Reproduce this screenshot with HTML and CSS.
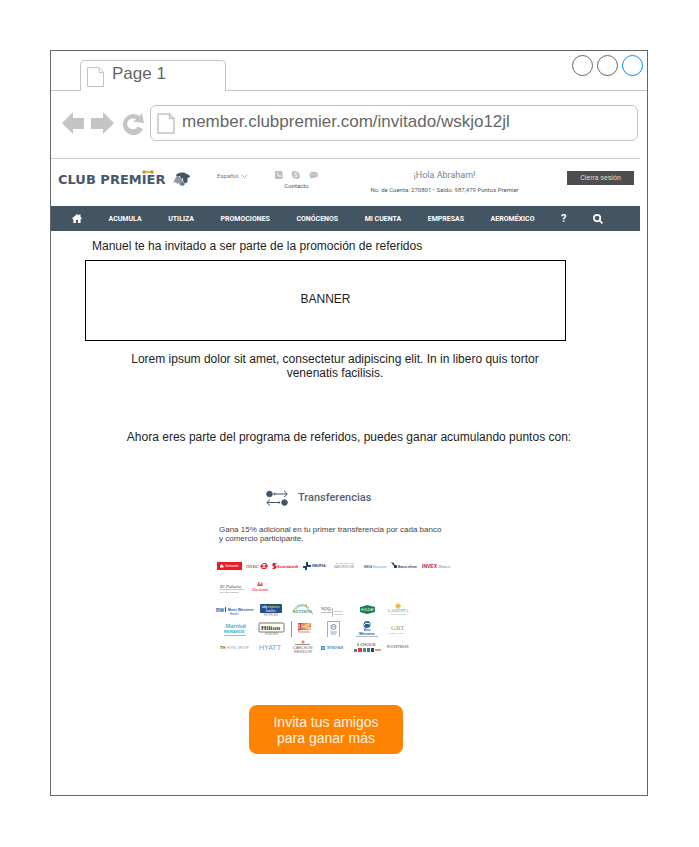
FILE: index.html
```html
<!DOCTYPE html>
<html lang="es">
<head>
<meta charset="utf-8">
<meta name="viewport" content="width=device-width, initial-scale=1">
<title>Club Premier</title>
<link rel="stylesheet" href="styles.css">
</head>
<body>
<div class="window">
  <div class="tabs">
    <div class="tab">
      <svg width="17" height="20" viewBox="0 0 17 20" fill="none" stroke="#c4c4c4"><path d="M.5.5H12L16.500 5.500V19.500H.5ZM12 .5V5.500H16.500"/></svg>
      <span>Page 1</span>
    </div>
    <div class="controls"><i></i><i></i><i class="active"></i></div>
  </div>
  <div class="toolbar">
    <svg width="84" height="24" viewBox="0 0 84 24" fill="#c4c4c4">
      <path d="M1 12 12 1V7H23V18H12V23Z"/>
      <path d="M53 12 42 1V7H30V18H42V23Z"/>
      <path d="M81 2 83 12 72 10.500 75 8.500A5.500 5.500 0 1 0 76.500 15.500L82 18A10.500 10.500 0 1 1 78.500 5Z"/>
    </svg>
    <label class="address">
      <svg width="18" height="21" viewBox="0 0 18 21" fill="none" stroke="#c4c4c4" stroke-width="1.500"><path d="M1 1H12.500L17 5.500V20H1ZM12.500 1V5.500H17"/></svg>
      <input type="text" aria-label="Dirección" value="member.clubpremier.com/invitado/wskjo12jl">
    </label>
  </div>

  <div class="site">
    <header class="header">
      <a class="logo" href="#">
        <span class="brand">CLUB PREM<span class="crown">IE<svg width="12" height="4" viewBox="0 0 12 4" fill="#dc8d22"><circle cx="2" cy="2" r="1.800"/><circle cx="10" cy="2" r="1.800"/><path d="M2 1.300H10V2.700H2Z"/></svg></span>R</span>
        <svg width="18" height="15" viewBox="0 0 18 15"><path fill="#435463" d="M3 3C5 0 11-.5 14 2L17 4 16 6 14.500 5.500V10L12 11.500 10 9V6L8 7 7 4 4 5Z"/><path fill="#8e99a3" d="M1 9 3 5 7 5 9 8 10 12 7 14 6 11 4 12 3 10 0 11Z"/><path fill="#607382" d="M9 9 12 12 10 14 8 13Z"/></svg>
      </a>
      <label class="language"><select aria-label="Idioma"><option>Español</option></select><svg width="7" height="4" viewBox="0 0 7 4" fill="none" stroke="#999" stroke-width=".7"><path d="M.5.5 3.500 3.500 6.500.5"/></svg></label>
      <a class="contact" href="#">
        <svg width="43" height="8" viewBox="0 0 43 8" fill="#bdbdbd">
          <rect width="7.500" height="8" rx="1"/><path d="M2 1.800C1.800 4 3.500 6 5.800 6L6 4.800 4.800 4.200 4.200 4.700 3 3.400 3.500 2.800 3 1.700Z" fill="#fff"/>
          <circle cx="19" cy="2.500" r="2.400"/><circle cx="22.500" cy="5.500" r="2.400"/><circle cx="20.800" cy="4" r="3.500"/><path d="M22.300 2.700C21.500 1.700 19.300 2 19.500 3 19.800 4.200 22.300 3.800 22.200 5 22 6.200 19.700 6 19.300 5" fill="none" stroke="#fff"/>
          <ellipse cx="38.700" cy="3.800" rx="4.200" ry="3"/><path d="M36 5 35.500 8 39 6Z"/><path d="M36.300 3.800H41.300" stroke="#fff" stroke-dasharray="1 1"/>
        </svg>
        <span>Contacto</span>
      </a>
      <div class="account">
        <p class="hello">¡Hola Abraham!</p>
        <p class="balance">No. de Cuenta: 270801 <b>•</b> Saldo: 987,479 Puntos Premier</p>
      </div>
      <button class="logout" type="button">Cierra sesión</button>
    </header>
    <nav class="nav">
      <a href="#" aria-label="Inicio"><svg width="10" height="9" viewBox="0 0 10 9" fill="#fff"><path d="M5 0 7 1.700V.6H8.500V3L10 4.400 9.400 5.200 8.600 4.500V9H6V6H4V9H1.400V4.500L.6 5.200 0 4.400Z"/></svg></a>
      <a href="#">ACUMULA</a>
      <a href="#">UTILIZA</a>
      <a href="#">PROMOCIONES</a>
      <a href="#">CONÓCENOS</a>
      <a href="#">MI CUENTA</a>
      <a href="#">EMPRESAS</a>
      <a href="#">AEROMÉXICO</a>
      <a href="#" class="help">?</a>
      <a href="#" aria-label="Buscar"><svg width="10" height="10" viewBox="0 0 10 10" fill="none" stroke="#fff" stroke-width="1.700"><circle cx="4.100" cy="4.100" r="3.200"/><path d="M6.500 6.500 9.500 9.500"/></svg></a>
    </nav>
  </div>

  <main class="main">
    <p class="invite">Manuel te ha invitado a ser parte de la promoción de referidos</p>
    <div class="banner">BANNER</div>
    <p class="lorem">Lorem ipsum dolor sit amet, consectetur adipiscing elit. In in libero quis tortor venenatis facilisis.</p>
    <p class="member">Ahora eres parte del programa de referidos, puedes ganar acumulando puntos con:</p>

    <section class="transfers">
      <h2>
        <svg width="22" height="16" viewBox="0 0 22 16" fill="#435463" stroke="#435463"><circle cx="3.500" cy="4" r="2.800"/><circle cx="18.500" cy="12.500" r="2.800"/><circle cx="8.500" cy="4" r=".7"/><circle cx="13" cy="12.500" r=".7"/><path fill="none" d="M9 4H21M18 .8 21.300 4 18 7.200M13 12.500H1M4 9.500.8 12.500 4 15.500"/></svg>
        Transferencias
      </h2>
      <p>Gana 15% adicional en tu primer transferencia por cada banco<br>y comercio participante.</p>

      <div class="banks">
        <svg width="25" height="8" viewBox="0 0 25 8"><path fill="#ec1c24" d="M0 0H25V8H0Z"/><path fill="#fff" d="M3 4 4.500 2 6.500 4V5.500H3Z"/><text x="8" y="5" font-size="3" fill="#fff">Santander</text></svg>
        <svg width="22" height="8" viewBox="0 0 22 8"><text class="serif" x="0" y="6" font-size="5" fill="#444">HSBC</text><path fill="#ec2c35" d="M14 4 17 1H20L22 4 20 7H16Z"/><path fill="#fff" d="M16 2 18 4 20 2ZM16 6 18 4 20 6Z"/></svg>
        <svg width="27" height="8" viewBox="0 0 27 8" fill="#e8212d"><path d="M1 1H5L3 3 5 5 3 7H0L2 5 0 3Z"/><text class="bold" x="5" y="6" font-size="4">Scotiabank</text></svg>
        <svg width="25" height="8" viewBox="0 0 25 8" fill="#1f4475"><path d="M3 0H5V3H8V5H4V8H2V6H0V4H3Z"/><text class="bold" x="9" y="5" font-size="3">INBURSA</text></svg>
        <svg width="29" height="8" viewBox="0 0 29 8" fill="#7d80ab"><text x="5" y="2" font-size="2">BANCO DEL BAJÍO</text><text x="3" y="6" font-size="3">BANORTE IXE</text></svg>
        <svg width="23" height="8" viewBox="0 0 23 8"><text class="bold" x="0" y="6" font-size="3" fill="#247bb8">BBVA</text><text x="9" y="6" font-size="3" fill="#58a3d0">Bancomer</text></svg>
        <svg width="27" height="8" viewBox="0 0 27 8" fill="#29456f"><path d="M0 0 3 1 4 5 2 3ZM3 3H6V6H3Z"/><text class="bold" x="7" y="6" font-size="3">Banco afirme</text></svg>
        <svg width="29" height="8" viewBox="0 0 29 8"><text class="bold" x="0" y="6" font-size="5" fill="#a91e43">INVEX</text><text x="17" y="6" font-size="4" fill="#888">Banco</text></svg>
      </div>
      <div class="shops">
        <svg width="25" height="14" viewBox="0 0 25 14"><text class="script" x="1" y="8" font-size="5" fill="#333">El Palacio</text><path d="M0 9.500H25" stroke="#cfae73" stroke-width=".7"/><text x="1" y="13" font-size="2" fill="#666">SOY TOTALMENTE</text></svg>
        <svg width="19" height="14" viewBox="0 0 19 14" fill="#e85b64"><path d="M6 6 8 1 9 5 11 2 12 6Z"/><text class="script bold" x="1" y="11" font-size="4">Hacienda</text></svg>
      </div>
      <div class="hotels">
        <svg width="38" height="14" viewBox="0 0 38 14" fill="#335c98"><text class="bold" x="0" y="9" font-size="5">BW</text><path d="M9 4H10V9H9Z"/><text class="bold" x="12" y="8" font-size="4">Best Western</text><text x="14" y="12" font-size="3">Hotels</text></svg>
        <svg width="22" height="14" viewBox="0 0 22 14"><rect y="1" width="22" height="9" rx="1" fill="#244f8c"/><text class="bold" x="2" y="5" font-size="3" fill="#fff">city</text><text class="bold" x="8" y="5" font-size="3" fill="#d1d84b">express</text><text x="6" y="9" font-size="3" fill="#fff">hoteles</text><text x="4" y="13" font-size="3" fill="#777">HOTELES</text></svg>
        <svg width="22" height="14" viewBox="0 0 22 14"><path d="M1 9C3 3 9 0 13 3S17 9 21 11M4 6C5 3 13 1 17 5" fill="none" stroke="#74aa8a" stroke-width=".8"/><circle cx="14" cy="2" r="1" fill="#d6b34c"/><text class="bold serif" x="1" y="10" font-size="4" fill="#449073">RETURNS</text></svg>
        <svg width="24" height="14" viewBox="0 0 24 14" fill="#82766f"><text x="0" y="7" font-size="6">spg.</text><path d="M0 9H11V9.600H0ZM11.500 5H12V14H11.500Z"/><text x="13" y="9" font-size="2">Starwood</text><text x="13" y="12" font-size="2">Preferred</text></svg>
        <svg width="17" height="14" viewBox="0 0 17 14"><path d="M1 4 5 3 8 2 12 3 16 4V9L12 10 8 11 4 10 1 9Z" fill="#17804b"/><text x="2" y="8" font-size="3" fill="#fff">HOLIDAY</text></svg>
        <svg width="24" height="14" viewBox="0 0 24 14"><circle cx="12" cy="3" r="2" fill="#f1b13d"/><circle cx="12" cy="3" r="2.500" fill="none" stroke="#f1b13d" stroke-dasharray="1 1"/><text class="serif" x="2" y="9" font-size="4" fill="#459982">LAQUINTA</text><text x="5" y="12" font-size="2" fill="#83a998">INNS &amp; SUITES</text></svg>

        <svg width="26" height="14" viewBox="0 0 26 14" fill="#35b0d3"><text class="bold script" x="3" y="6" font-size="6">Marriott</text><text class="bold" x="2" y="11" font-size="4">REWARDS</text><path d="M2 13H24V13.700H2Z"/></svg>
        <svg width="27" height="15" viewBox="0 0 27 15"><rect x="1" y="2" width="25" height="9" rx="1" fill="none" stroke="#777"/><text class="bold serif" x="3" y="9" font-size="7" fill="#333">Hilton</text><text x="7" y="14" font-size="3" fill="#777">HONORS</text></svg>
        <svg class="divided" width="20" height="16" viewBox="0 0 20 16"><path fill="#d94935" d="M2 2H7V9H2Z"/><path fill="#ef8e35" d="M7 2H15V9H7Z"/><path d="M3 3V8M6 3V8M6 5.500H10M10 3V8M14 3H12V8H14V6" fill="none" stroke="#fff" stroke-width=".8"/><text x="2" y="12" font-size="3" fill="#ca513e">Rewards</text></svg>
        <svg width="13" height="16" viewBox="0 0 13 16" fill="none" stroke="#7789a9"><path d="M.5 16V.5H12.500V16" stroke-width=".7"/><circle cx="6.500" cy="6" r="2.500"/><path d="M5 6H8M3 11H10M4 13H9" stroke-width=".8"/></svg>
        <svg width="22" height="16" viewBox="0 0 22 16"><circle cx="11" cy="3.500" r="3.500" fill="#1d6798"/><path d="M8 4 10 2 14 3" stroke="#fff" fill="none"/><text class="bold" x="8" y="10" font-size="3" fill="#245b8c">Best</text><text class="bold" x="3" y="14" font-size="4" fill="#245b8c">Western</text><path d="M0 15.500H22" stroke="#8c9bb2" stroke-width=".7"/></svg>
        <svg width="24" height="14" viewBox="0 0 24 14" fill="#a5977e"><text class="serif" x="5" y="8" font-size="7">GRT</text><text x="3" y="12" font-size="2">GLOBAL HOTEL</text></svg>

        <svg width="32" height="14" viewBox="0 0 32 14"><text class="bold" x="1" y="8" font-size="4" fill="#555">TH</text><text x="8" y="8" font-size="3" fill="#999">HOTEL GROUP</text></svg>
        <svg width="26" height="14" viewBox="0 0 26 14"><text x="1" y="9" font-size="7" fill="#69a6c9">HYATT</text></svg>
        <svg width="22" height="16" viewBox="0 0 22 16" fill="#655e59"><circle cx="11" cy="2" r="1.500" fill="#e78153"/><path d="M3 4H18V4.700H3Z"/><text x="1" y="9" font-size="4">CARLSON</text><text x="2" y="13" font-size="4">REZIDOR</text></svg>
        <svg width="24" height="14" viewBox="0 0 24 14" fill="#3996cb"><path d="M0 5H4V9H0Z"/><path d="M1 7H3" stroke="#fff"/><text class="bold" x="6" y="8" font-size="3">WYNDHAM</text></svg>
        <svg width="27" height="14" viewBox="0 0 27 14"><path fill="#e7ad3d" d="M3 2H5V5H3Z"/><text class="bold" x="6" y="5" font-size="4" fill="#83776d">CHOICE</text><path fill="#6c6f77" d="M0 8H3V11H0Z"/><path fill="#d13f43" d="M4 7H8V11H4Z"/><path fill="#479b61" d="M9 7H12V11H9Z"/><path fill="#3573a4" d="M13 7H16V11H13Z"/><path fill="#343b6e" d="M17 7H20V11H17Z"/><path fill="#e2987a" d="M21 8H27V10H21Z"/></svg>
        <svg width="26" height="14" viewBox="0 0 26 14"><text x="2" y="7" font-size="3" fill="#4d4854">ROCKETMILES</text></svg>
      </div>
    </section>

    <button class="cta" type="button">Invita tus amigos<br>para ganar más</button>
  </main>
</div>
</body>
</html>
```
FILE: styles.css
```css
* { box-sizing: border-box; }
body { margin: 0; background: #fff; color: #222; font: 12px/14px "Liberation Sans", Arial, sans-serif; }
p, h2 { margin: 0; }
a { color: inherit; text-decoration: none; }
svg { display: block; flex: none; overflow: visible; }
button, input, select { font: inherit; color: inherit; }

.window { margin: 50px 51px 50px 50px; border: 1px solid #666; }

.tabs { display: flex; justify-content: space-between; height: 40px; padding: 4px 4px 0 29px; border-bottom: 1px solid #c4c4c4; }
.tab { display: flex; gap: 8px; width: 146px; height: 31px; margin-top: 5px; padding: 6px; border: 1px solid #c4c4c4; border-bottom: 0; border-radius: 5px 5px 0 0; background: #fff; color: #666; font-size: 17px; line-height: 14px; }
.controls { display: flex; gap: 4px; }
.controls i { width: 21px; height: 21px; border: 1px solid #666; border-radius: 50%; }
.controls .active { border-color: #008cff; }

.toolbar { display: flex; align-items: center; gap: 5px; padding: 14px 9px 17px 10px; color: #666; }
.address { display: flex; flex: 1; align-items: center; gap: 7px; height: 36px; padding: 0 6px; border: 1px solid #c4c4c4; border-radius: 6px; }
.address input { flex: 1; min-width: 0; padding: 0 0 2px; border: 0; background: none; font-size: 17px; outline: 0; }

.site { margin-right: 7px; border-top: 1px solid #ccc; font-family: Roboto, sans-serif; }
.header { display: flex; align-items: flex-start; height: 47px; padding: 12px 6px 0 7px; }
.logo { display: flex; gap: 8px; width: 159px; padding-top: 1px; color: #47586a; }
.brand { font: bold 13px/16px "DejaVu Sans", sans-serif; white-space: nowrap; }
.crown { position: relative; }
.crown svg { position: absolute; top: -2px; left: 0; }
.language { display: flex; align-items: center; gap: 2px; width: 58px; color: #777; font-size: 6px; line-height: 10px; }
.language select { appearance: none; padding: 0; border: 0; background: none; }
.contact { display: flex; flex-direction: column; align-items: center; gap: 2px; width: 43px; color: #555; font-size: 6px; line-height: 10px; }
.account { flex: 1; padding-left: 4px; text-align: center; white-space: nowrap; }
.hello { color: #6c8797; font-size: 9px; line-height: 8px; }
.balance { margin-top: 6px; color: #555; font-size: 6px; line-height: 10px; }
.balance b { color: #e89345; }
.logout { width: 67px; height: 14px; padding: 0; border: 0; background: #4d4e4d; color: #ddd; font-size: 7px; line-height: 14px; }
.nav { display: flex; align-items: center; justify-content: space-between; height: 25px; padding: 0 37px 0 21px; background: #435463; color: #fff; font-size: 7px; font-weight: 700; }
.nav .help { font-size: 11px; }

.invite { margin: 8px 41px 7px; }
.banner { display: flex; align-items: center; justify-content: center; height: 81px; margin: 0 81px 0 34px; padding-bottom: 4px; border: 1px solid #000; }
.lorem { margin: 11px 98px 0 70px; text-align: center; }
.member { margin-top: 50px; text-align: center; }
.transfers { width: 234px; margin: 46px auto 0; position: relative; right: 15px; }
.transfers h2 { display: flex; align-items: center; gap: 10px; margin-left: 49px; color: #536475; font: 500 11px/16px Roboto, sans-serif; }
.transfers p { margin: 19px 0 0 2px; color: #444; font-size: 8px; line-height: 9px; white-space: nowrap; }
.banks { display: flex; justify-content: space-between; margin-top: 19px; }
.shops { display: flex; gap: 7px; margin: 10px 0 0 2px; }
.hotels { display: grid; grid-template-columns: 36px 36px 28px 32px 36px 26px; grid-auto-rows: 19px; place-items: center; margin-top: 6px; }
.divided { box-sizing: content-box; padding-left: 4px; border-left: 1px solid #8a94a5; }
.serif { font-family: "Liberation Serif", serif; }
.script { font-family: "Liberation Serif", serif; font-style: italic; }
.bold { font-weight: 700; }
.cta { display: block; width: 154px; margin: 48px auto 41px; padding: 9px 0 8px; position: relative; right: 23px; border: 0; border-radius: 8px; background: #ff8303; color: #fff3e0; font-size: 14px; line-height: 16px; }
```
